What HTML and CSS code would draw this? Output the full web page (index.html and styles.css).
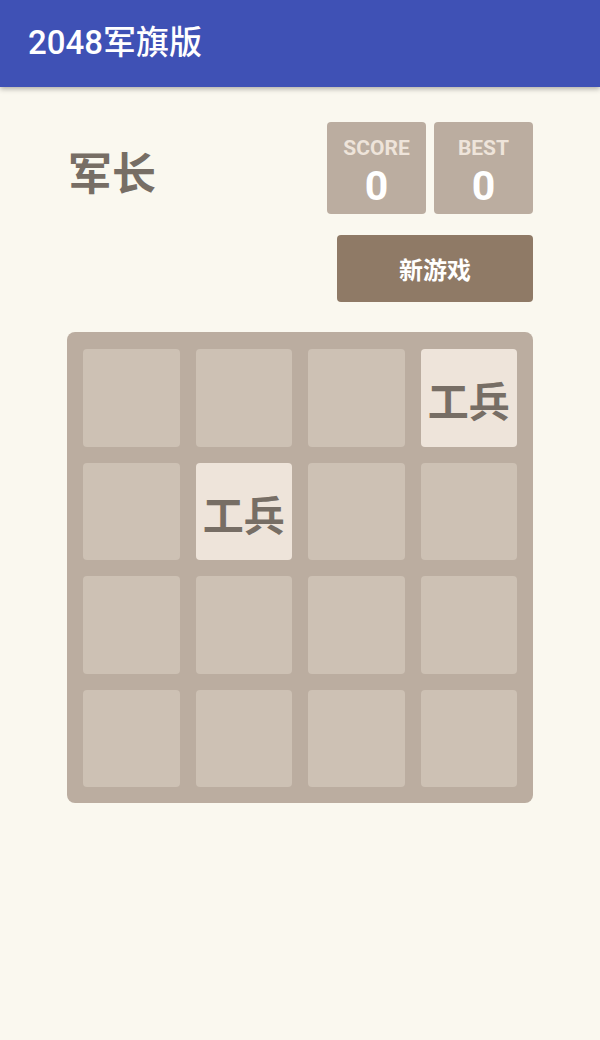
FILE: index.html
```html
<!DOCTYPE html>
<html lang="zh">
<head>
<meta charset="utf-8">
<title>2048军旗版</title>
<link rel="stylesheet" href="styles.css">
</head>
<body>
<header class="appbar"><h1 class="apptitle">2048军旗版</h1></header>
<main class="game">
  <section class="top">
    <div class="rank">军长</div>
    <div class="side">
      <div class="scores">
        <div class="scorebox"><div class="label">SCORE</div><div class="value">0</div></div>
        <div class="scorebox"><div class="label">BEST</div><div class="value">0</div></div>
      </div>
      <button class="newgame">新游戏</button>
    </div>
  </section>
  <section class="board">
    <div class="tile"></div><div class="tile"></div><div class="tile"></div><div class="tile filled">工兵</div>
    <div class="tile"></div><div class="tile filled">工兵</div><div class="tile"></div><div class="tile"></div>
    <div class="tile"></div><div class="tile"></div><div class="tile"></div><div class="tile"></div>
    <div class="tile"></div><div class="tile"></div><div class="tile"></div><div class="tile"></div>
  </section>
</main>
</body>
</html>
```
FILE: styles.css
```css
html, body {
  margin: 0;
  padding: 0;
}
body {
  width: 600px;
  height: 1040px;
  background: #faf8ef;
  font-family: Roboto, "Noto Sans CJK SC", sans-serif;
  overflow: hidden;
}
.appbar {
  height: 87px;
  background: #3f51b5;
  box-shadow: 0 2px 5px rgba(0,0,0,0.3);
  display: flex;
  align-items: center;
  padding-left: 28px;
  position: relative;
}
.apptitle {
  margin: 0;
  color: #fff;
  font-size: 33px;
  font-weight: 500;
  line-height: 1;
  padding-bottom: 2px;
}
.game {
  width: 466px;
  margin: 0 auto;
  padding-top: 35px;
}
.top {
  display: flex;
  justify-content: space-between;
  align-items: flex-start;
}
.rank {
  font-family: "Noto Sans CJK SC", sans-serif;
  font-weight: 700;
  font-size: 44px;
  line-height: 1;
  color: #776e65;
  margin-top: 27px;
  padding-left: 1px;
}
.side {
  display: flex;
  flex-direction: column;
  align-items: flex-end;
  gap: 21px;
}
.scores {
  display: flex;
  gap: 8px;
}
.scorebox {
  width: 99px;
  height: 92px;
  background: #bbada0;
  border-radius: 4px;
  display: flex;
  flex-direction: column;
  align-items: center;
  box-sizing: border-box;
  padding-top: 14px;
}
.label {
  color: #eee4da;
  font-size: 21px;
  font-weight: 700;
  line-height: 24px;
}
.value {
  color: #fff;
  font-size: 41px;
  font-weight: 700;
  line-height: 44px;
  margin-top: 4px;
}
.newgame {
  width: 196px;
  height: 67px;
  background: #8f7a66;
  border: none;
  border-radius: 4px;
  color: #fff;
  font-family: "Noto Sans CJK SC", sans-serif;
  font-weight: 700;
  font-size: 24px;
  padding: 0;
}
.board {
  margin-top: 30px;
  height: 471px;
  box-sizing: border-box;
  padding: 17px 16px 16px;
  background: #bbada0;
  border-radius: 8px;
  display: grid;
  grid-template-columns: repeat(4, 1fr);
  grid-template-rows: repeat(4, 1fr);
  gap: 16px;
}
.tile {
  background: #cdc1b4;
  border-radius: 4px;
  display: flex;
  align-items: center;
  justify-content: center;
}
.filled {
  background: #eee4da;
  color: #776e65;
  font-family: "Noto Sans CJK SC", sans-serif;
  font-weight: 700;
  font-size: 41px;
  line-height: 1;
  padding-top: 4px;
  box-sizing: border-box;
}
```
